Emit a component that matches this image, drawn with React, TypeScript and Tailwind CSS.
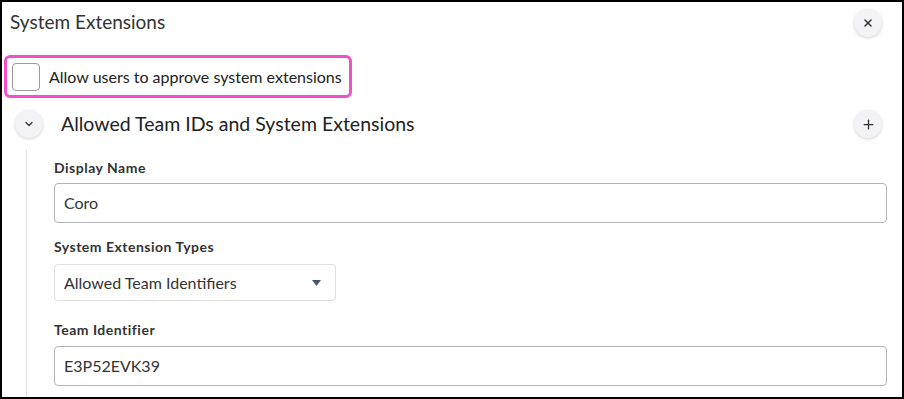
import { ChevronDown, Plus, X } from 'lucide-react'

// 시스템 확장 설정 패널
function RoundButton({ children }: { children: React.ReactNode }) {
  return (
    <button className="flex h-[28px] w-[28px] items-center justify-center rounded-full bg-[#f3f3f5] text-[#333] shadow-[0_1px_3px_rgba(0,0,0,0.18)]">
      {children}
    </button>
  )
}

function Label({ text, mb }: { text: string; mb: string }) {
  return (
    <label className={`${mb} text-[14px] font-bold leading-[16px] tracking-[0.5px] text-[#333]`}>{text}</label>
  )
}

export default function App() {
  return (
    <div
      className="flex h-[399px] w-[904px] flex-col overflow-hidden border-[2px] border-black bg-white"
      style={{ fontFamily: 'Lato, "Liberation Sans", sans-serif' }}
    >
      <div className="flex items-center justify-between pl-[8px] pr-[20px] pt-[5px]">
        <h2 className="text-[19px] leading-[26px] text-[#333]">System Extensions</h2>
        <div className="mt-[2px]">
          <RoundButton>
            <X size={12} strokeWidth={3} />
          </RoundButton>
        </div>
      </div>

      <div className="ml-[2px] mt-[18px] flex h-[43px] w-[348px] items-center gap-[9px] rounded-[6px] border-[3px] border-[#f24fc8] pl-[5px]">
        <span className="h-[28px] w-[28px] rounded-[4px] border border-[#9a9a9a] bg-white" />
        <span className="text-[16px] text-[#222]">Allow users to approve system extensions</span>
      </div>

      <div className="mt-[12px] flex items-center justify-between pl-[13px] pr-[20px]">
        <div className="flex items-center gap-[18px]">
          <RoundButton>
            <ChevronDown size={12} strokeWidth={2.5} />
          </RoundButton>
          <span className="text-[19.5px] leading-[26px] text-[#222]">Allowed Team IDs and System Extensions</span>
        </div>
        <RoundButton>
          <Plus size={15} strokeWidth={2} />
        </RoundButton>
      </div>

      <div className="ml-[24px] mr-[15px] mt-[12px] flex flex-1 flex-col border-l border-[#e2e2e2] pl-[27px] pt-[10px]">
        <Label text="Display Name" mb="mb-[7px]" />
        <div className="flex h-[40px] items-center rounded-[4px] border border-[#b4b4b4] px-[9px] text-[16px] text-[#333]">
          Coro
        </div>

        <div className="mt-[16px] flex flex-col">
          <Label text="System Extension Types" mb="mb-[9px]" />
          <div className="flex h-[37px] w-[282px] items-center justify-between rounded-[4px] border border-[#dedede] pl-[9px] pr-[14px] text-[16px] text-[#333]">
            <span>Allowed Team Identifiers</span>
            <svg width="9" height="6" viewBox="0 0 9 6">
              <path d="M0 0h9L4.5 6z" fill="#4a5568" />
            </svg>
          </div>
        </div>

        <div className="mt-[21px] flex flex-col">
          <Label text="Team Identifier" mb="mb-[8px]" />
          <div className="flex h-[40px] items-center rounded-[4px] border border-[#b4b4b4] px-[9px] text-[16px] text-[#333]">
            E3P52EVK39
          </div>
        </div>
      </div>
    </div>
  )
}
